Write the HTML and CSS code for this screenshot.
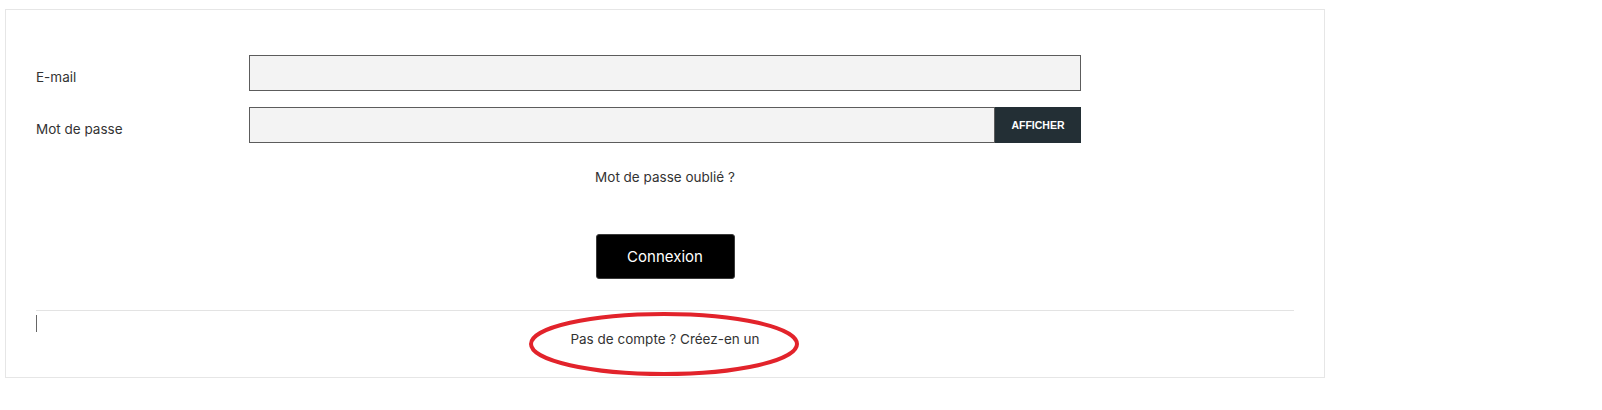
FILE: index.html
```html
<!DOCTYPE html>
<html lang="fr">
<head>
<meta charset="utf-8">
<title>Connexion</title>
<link rel="stylesheet" href="styles.css">
</head>
<body>
<div class="card">
  <form class="login-form">
    <div class="fields">
      <div class="field-row">
        <label class="field-label" for="email">E-mail</label>
        <div class="field-control">
          <input class="text-input" id="email" type="email">
        </div>
      </div>
      <div class="field-row">
        <label class="field-label" for="password">Mot de passe</label>
        <div class="field-control input-group">
          <input class="text-input" id="password" type="password">
          <button class="show-btn" type="button">AFFICHER</button>
        </div>
      </div>
    </div>
    <div class="forgot"><a href="#">Mot de passe oublié ?</a></div>
    <div class="submit-wrap"><button class="submit-btn" type="button">Connexion</button></div>
  </form>
  <hr class="divider">
  <div class="footer">
    <span class="caret"></span>
    <a class="create-link" href="#">Pas de compte ? Créez-en un</a>
    <svg class="annotation" width="272" height="66" viewBox="0 0 272 66">
      <ellipse cx="136" cy="33" rx="133" ry="30" fill="none" stroke="#e2232b" stroke-width="4"/>
    </svg>
  </div>
</div>
</body>
</html>
```
FILE: styles.css
```css
* { box-sizing: border-box; }
html, body { margin: 0; padding: 0; background: #fff; }
body {
  font-family: Inter, "Noto Sans", sans-serif;
  font-size: 13.5px;
  color: #333;
  padding: 9px 0 0 5px;
}
.card {
  width: 1320px;
  border: 1px solid #e6e6e6;
  padding: 30px 30px 28px;
}
.fields {
  margin-top: 15px;
  display: flex;
  flex-direction: column;
  gap: 16px;
}
.field-row {
  display: grid;
  grid-template-columns: 213px 832px;
  align-items: center;
}
.field-label { color: #333; padding-top: 8px; line-height: 20px; }
.field-control { display: flex; height: 36px; }
.text-input {
  flex: 1;
  height: 36px;
  border: 1px solid #5c5c5c;
  background: #f3f3f3;
  margin: 0;
  padding: 0 10px;
  font: inherit;
  outline: none;
}
.show-btn {
  width: 86px;
  height: 36px;
  border: 0;
  margin: 0;
  background: #232f35;
  color: #fff;
  font-family: "Liberation Sans", Arial, sans-serif;
  font-weight: bold;
  font-size: 10.5px;
  padding: 0;
}
.forgot {
  margin-top: 24px;
  text-align: center;
  line-height: 20px;
}
.forgot a { color: #333; text-decoration: none; }
.submit-wrap {
  margin-top: 47px;
  display: flex;
  justify-content: center;
}
.submit-btn {
  width: 139px;
  height: 45px;
  background: #000;
  color: #fff;
  border: 1px solid #3a3a3a;
  border-radius: 3px;
  font-family: Inter, "Noto Sans", sans-serif;
  font-size: 15px;
  margin: 0;
}
.divider {
  margin: 31px 0 0;
  border: 0;
  border-top: 1px solid #e3e3e3;
  height: 0;
}
.footer {
  position: relative;
  padding-top: 18px;
  text-align: center;
  line-height: 20px;
}
.create-link { color: #333; text-decoration: none; }
.caret {
  position: absolute;
  left: 0;
  top: 4px;
  width: 1px;
  height: 17px;
  background: #666;
}
.annotation {
  position: absolute;
  left: 492px;
  top: 0;
}
```
